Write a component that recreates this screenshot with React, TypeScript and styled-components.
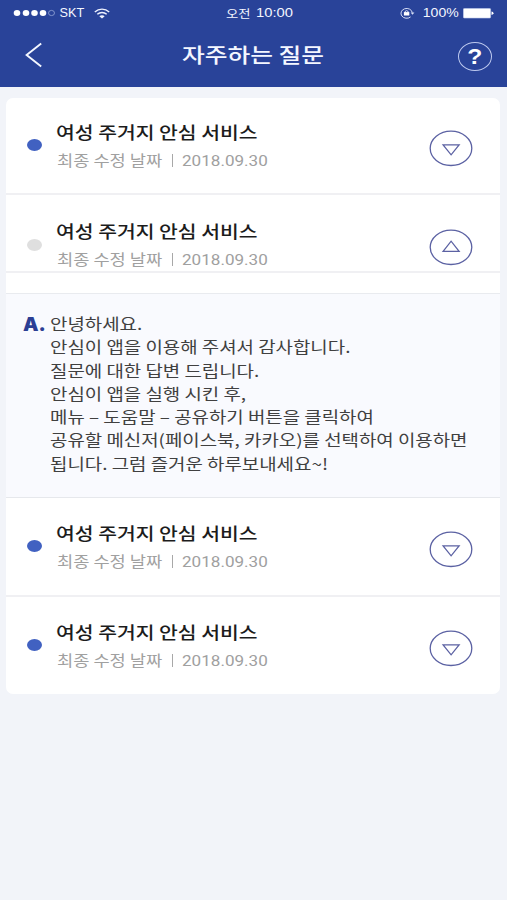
import React from "react";
import styled, { createGlobalStyle } from "styled-components";

const Global = createGlobalStyle`
  * { box-sizing: border-box; }
  html, body { margin: 0; padding: 0; background: #f2f4f9; }
  body { font-family: "Noto Sans CJK KR", "Noto Sans", sans-serif; }
`;

const Screen = styled.div`
  width: 507px;
  height: 900px;
  overflow: hidden;
  background: #f2f4f9;
`;

const Header = styled.header`
  height: 87px;
  background: #294399;
  color: #f4f7ff;
`;

const StatusBar = styled.div`
  height: 26px;
  display: grid;
  grid-template-columns: 226px 174px 1fr;
  align-items: center;
`;

const StatusGroup = styled.div`
  display: flex;
  align-items: center;
  height: 26px;
`;

const Carrier = styled(StatusGroup)`
  padding-left: 13px;
`;

const fonts = {
  korean: '"Noto Sans CJK KR", sans-serif',
  latin: '"Liberation Sans", Arial, sans-serif',
  digits: 'Roboto, "Liberation Sans", sans-serif',
  display: 'Inter, "Liberation Sans", sans-serif',
};

const Stretch = styled.span<{
  $w: number;
  $scale: number;
  $size: number;
  $weight?: number;
  $line?: number;
  $font?: keyof typeof fonts;
}>`
  display: block;
  flex: none;
  width: ${(p) => p.$w}px;
  font-size: ${(p) => p.$size}px;
  font-weight: ${(p) => p.$weight ?? 400};
  font-family: ${(p) => fonts[p.$font ?? "korean"]};
  line-height: ${(p) => p.$line ?? 20}px;
  white-space: nowrap;
  transform: scaleX(${(p) => p.$scale});
  transform-origin: 0 50%;
`;

const DateText = styled(Stretch)`
  padding-top: 2px;
`;

const NavBar = styled.div`
  height: 61px;
  display: grid;
  grid-template-columns: 182px 1fr 50px;
  align-items: center;
`;

const IconButton = styled.button<{ $left?: number }>`
  display: flex;
  justify-self: start;
  border: 0;
  padding: 0;
  margin-left: ${(p) => p.$left ?? 0}px;
  background: none;
  cursor: pointer;
`;

const BackButton = styled(IconButton)`
  margin-bottom: 4px;
`;

const Title = styled.h1`
  margin: 0 0 5px;
`;

const Card = styled.main`
  margin: 11px 7px 0 6px;
  height: 596px;
  border-radius: 7px;
  overflow: hidden;
  background: #fff;
`;

const Row = styled.section<{ $height: number; $top: number; $last?: boolean }>`
  display: grid;
  grid-template-columns: 49.5px 1fr 71.5px;
  height: ${(p) => p.$height}px;
  padding-top: ${(p) => p.$top}px;
  border-bottom: ${(p) => (p.$last ? 0 : 2)}px solid #f0f0f3;
`;

const Dot = styled.i<{ $open?: boolean }>`
  width: 15px;
  height: 12px;
  margin: ${(p) => (p.$open ? 17.5 : 17)}px 0 0 21px;
  border-radius: 50%;
  background: ${(p) => (p.$open ? "#dfdfdf" : "#4161c1")};
`;

const Question = styled.div`
  color: #1c1c1c;
`;

const Meta = styled.div`
  display: flex;
  align-items: center;
  height: 20px;
  margin-top: 8px;
  padding-left: 1px;
  color: #a0a0a0;
`;

const Bar = styled.i`
  width: 1px;
  height: 13px;
  margin: 0 9px;
  background: #a8a8a8;
`;

const Toggle = styled(IconButton)`
  align-self: start;
  margin-top: 8px;
`;

const Spacer = styled.div`
  height: 21px;
  border-bottom: 1px solid #e9ebef;
`;

const Answer = styled.section`
  display: flex;
  height: 204px;
  padding: 20px 0 0 17px;
  background: #f9fafe;
  border-bottom: 1px solid #e6e8ec;
  color: #404040;
`;

const Mark = styled.div`
  width: 26.5px;
  color: #2c3f94;
`;

const Lines = styled.div`
  display: grid;
  grid-auto-rows: 23.25px;
`;

const Chevron = () => (
  <svg width="18" height="26" viewBox="0 0 18 26" fill="none" stroke="#f4f7ff" strokeWidth="1.9">
    <path d="M16.2 1.5L1.6 13L16.2 24.5" />
  </svg>
);

const Wifi = () => (
  <svg width="16" height="11" viewBox="0 0 16 11" fill="none" stroke="#eef2ff" strokeWidth="1.4">
    <path d="M.8 4C4.9.1 11.1.1 15.2 4M3.3 6.3c2.7-2.5 6.7-2.5 9.4 0" />
    <path d="M5.3 8.3c1.5-1.4 3.9-1.4 5.4 0L8 10.6z" fill="#eef2ff" stroke="none" />
  </svg>
);

const Signal = () => (
  <svg width="43" height="8" viewBox="0 0 43 8">
    {[4, 13, 21.5, 30].map((x) => (
      <ellipse key={x} cx={x} cy="4" rx="3.3" ry="2.9" fill="#fff" />
    ))}
    <ellipse cx="38.5" cy="4" rx="3" ry="2.6" fill="none" stroke="#a4b3df" strokeWidth=".7" />
  </svg>
);

const RotationLock = () => (
  <svg width="15" height="12" viewBox="0 0 15 12" fill="none" stroke="#d5ddf6" strokeWidth="1">
    <path d="M10.6 9.9A5.7 4.9 0 1 1 12.3 5.6" />
    <path d="M10.6 5.4h3.8l-1.9 2.3z" fill="#d5ddf6" stroke="none" />
    <path d="M5 5.7V4.5q1.6-1.7 3.2 0v1.2" />
    <rect x="3.9" y="5.1" width="5.4" height="3.4" fill="#fff" stroke="none" />
  </svg>
);

const Battery = () => (
  <svg width="31" height="11" viewBox="0 0 31 11">
    <rect x=".4" y=".4" width="27.2" height="9.6" rx="1" fill="#fff" stroke="#c5cfee" strokeWidth=".6" />
    <path d="M28.5 3.5q2 .3 2 1.7t-2 1.7z" fill="#fff" />
  </svg>
);

const Time = styled.div`
  display: flex;
`;

const Help = styled.span`
  display: flex;
  align-items: center;
  justify-content: center;
  width: 34px;
  height: 29px;
  border: 1px solid #bdc9ef;
  border-radius: 50%;
  color: #fff;
  font: 700 22px/27px "Liberation Sans", sans-serif;
`;

const HelpGlyph = styled.span`
  transform: scaleX(1.12);
`;

const Triangle = ({ up }: { up?: boolean }) => (
  <svg width="44" height="37" viewBox="0 0 44 37" fill="none" stroke="#5c62a3" strokeWidth="1.3">
    <ellipse cx="22" cy="18.3" rx="20.8" ry="17.2" />
    <path d={up ? "M14.1 22.3L22.1 12.2L30.1 22.3Z" : "M14.1 14.8H30.1L22.1 24.8Z"} />
  </svg>
);

type ItemProps = { height: number; top: number; open?: boolean; last?: boolean };

const Item = ({ height, top, open, last }: ItemProps) => (
  <Row $height={height} $top={top} $last={last}>
    <Dot $open={open} />
    <Question>
      <Stretch $w={201} $size={17} $scale={1.2} $weight={500}>여성 주거지 안심 서비스</Stretch>
      <Meta>
        <Stretch $w={106} $size={14.7} $scale={1.2}>최종 수정 날짜</Stretch>
        <Bar />
        <DateText $w={86} $size={14} $scale={1.22} $font="digits">2018.09.30</DateText>
      </Meta>
    </Question>
    <Toggle aria-label={open ? "접기" : "펼치기"}>
      <Triangle up={open} />
    </Toggle>
  </Row>
);

const answer = [
  "안녕하세요.",
  "안심이 앱을 이용해 주셔서 감사합니다.",
  "질문에 대한 답변 드립니다.",
  "안심이 앱을 실행 시킨 후,",
  "메뉴 – 도움말 – 공유하기 버튼을 클릭하여",
  "공유할 메신저(페이스북, 카카오)를 선택하여 이용하면",
  "됩니다. 그럼 즐거운 하루보내세요~!",
];

export default function App() {
  return (
    <Screen>
      <Global />
      <Header>
        <StatusBar>
          <Carrier>
            <Signal />
            <Stretch $w={38} $size={12} $scale={1.06} $font="latin">&nbsp;SKT</Stretch>
            <Wifi />
          </Carrier>
          <Time>
            <Stretch $w={29.5} $size={11.3} $scale={1.18}>오전</Stretch>
            <Stretch $w={38} $size={12} $scale={1.23} $font="latin">10:00</Stretch>
          </Time>
          <StatusGroup>
            <RotationLock />
            <Stretch $w={48} $size={12} $scale={1.17} $font="latin">&nbsp;&nbsp;100%</Stretch>
            <Battery />
          </StatusGroup>
        </StatusBar>
        <NavBar>
          <BackButton $left={25} aria-label="뒤로"><Chevron /></BackButton>
          <Title>
            <Stretch $w={142} $size={20.6} $scale={1.2} $weight={500}>자주하는 질문</Stretch>
          </Title>
          <IconButton $left={1} aria-label="도움말">
            <Help><HelpGlyph>?</HelpGlyph></Help>
          </IconButton>
        </NavBar>
      </Header>
      <Card>
        <Item height={97} top={24} />
        <Item height={78} top={26} open />
        <Spacer />
        <Answer>
          <Mark>
            <Stretch $w={20} $size={18.5} $scale={1.06} $weight={900} $font="display">A.</Stretch>
          </Mark>
          <Lines>
            {answer.map((line) => (
              <Stretch key={line} $w={418} $size={15.75} $scale={1.2}>{line}</Stretch>
            ))}
          </Lines>
        </Answer>
        <Item height={99} top={25} />
        <Item height={97} top={25} last />
      </Card>
    </Screen>
  );
}
